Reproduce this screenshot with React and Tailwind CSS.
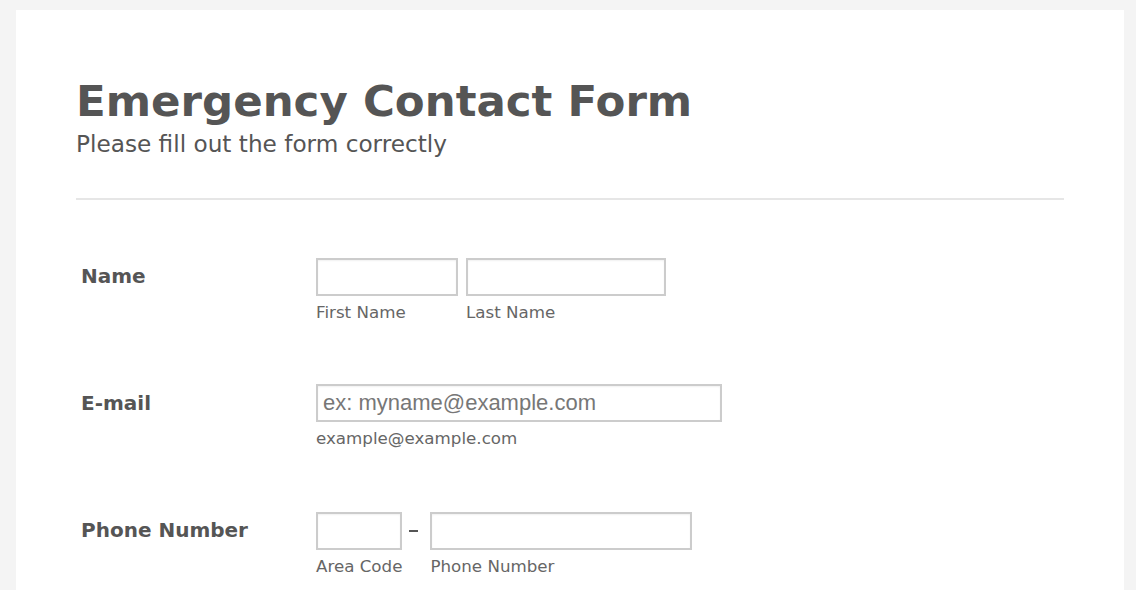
export default function App() {
  const font = { fontFamily: '"DejaVu Sans", sans-serif' };

  const inputCls =
    "h-[38px] border-2 border-[#cccccc] bg-white px-[5px] outline-none shadow-[inset_0_1px_2px_rgba(0,0,0,0.06)]";

  return (
    <div className="min-h-[590px] bg-[#f4f4f4] pt-[10px] pl-[16px]" style={font}>
      <div className="w-[1108px] min-h-[580px] bg-white px-[60px] pt-[70px]">
        {/* Header */}
        <h1 className="text-[43.5px] leading-none font-bold text-[#555555]">
          Emergency Contact Form
        </h1>
        <p className="mt-[8px] text-[23.2px] leading-none text-[#555555]">
          Please fill out the form correctly
        </p>
        <div className="mt-[43px] h-[2px] bg-[#e6e6e6]" />

        {/* Name */}
        <div className="mt-[58px] flex">
          <div className="w-[240px] pl-[5px] pt-[8px] text-[20px] leading-none font-bold text-[#555555]">
            Name
          </div>
          <div className="flex gap-[8px]">
            <div className="flex flex-col">
              <input className={`${inputCls} w-[142px]`} />
              <span className="mt-[8px] text-[16.7px] leading-none text-[#666666]">
                First Name
              </span>
            </div>
            <div className="flex flex-col">
              <input className={`${inputCls} w-[200px]`} />
              <span className="mt-[8px] text-[16.7px] leading-none text-[#666666]">
                Last Name
              </span>
            </div>
          </div>
        </div>

        {/* E-mail */}
        <div className="mt-[64px] flex">
          <div className="w-[240px] pl-[5px] pt-[9px] text-[20px] leading-none font-bold text-[#555555]">
            E-mail
          </div>
          <div className="flex flex-col">
            <input
              className={`${inputCls} w-[406px] text-[22px] placeholder:text-[#777777]`}
              style={{ fontFamily: '"Liberation Sans", Arial, sans-serif' }}
              placeholder="ex: myname@example.com"
            />
            <span className="mt-[8px] text-[16.7px] leading-none text-[#666666]">
              example@example.com
            </span>
          </div>
        </div>

        {/* Phone Number */}
        <div className="mt-[65px] flex">
          <div className="w-[240px] pl-[5px] pt-[8px] text-[20px] leading-none font-bold text-[#555555]">
            Phone Number
          </div>
          <div className="flex">
            <div className="flex flex-col">
              <input className={`${inputCls} w-[86px]`} />
              <span className="mt-[8px] text-[16.7px] leading-none text-[#666666]">
                Area Code
              </span>
            </div>
            <div className="flex h-[38px] w-[28px] items-center pl-[7px]">
              <span className="block h-[2px] w-[9px] bg-[#555555]" />
            </div>
            <div className="flex flex-col">
              <input className={`${inputCls} w-[262px]`} />
              <span className="mt-[8px] text-[16.7px] leading-none text-[#666666]">
                Phone Number
              </span>
            </div>
          </div>
        </div>
      </div>
    </div>
  );
}
